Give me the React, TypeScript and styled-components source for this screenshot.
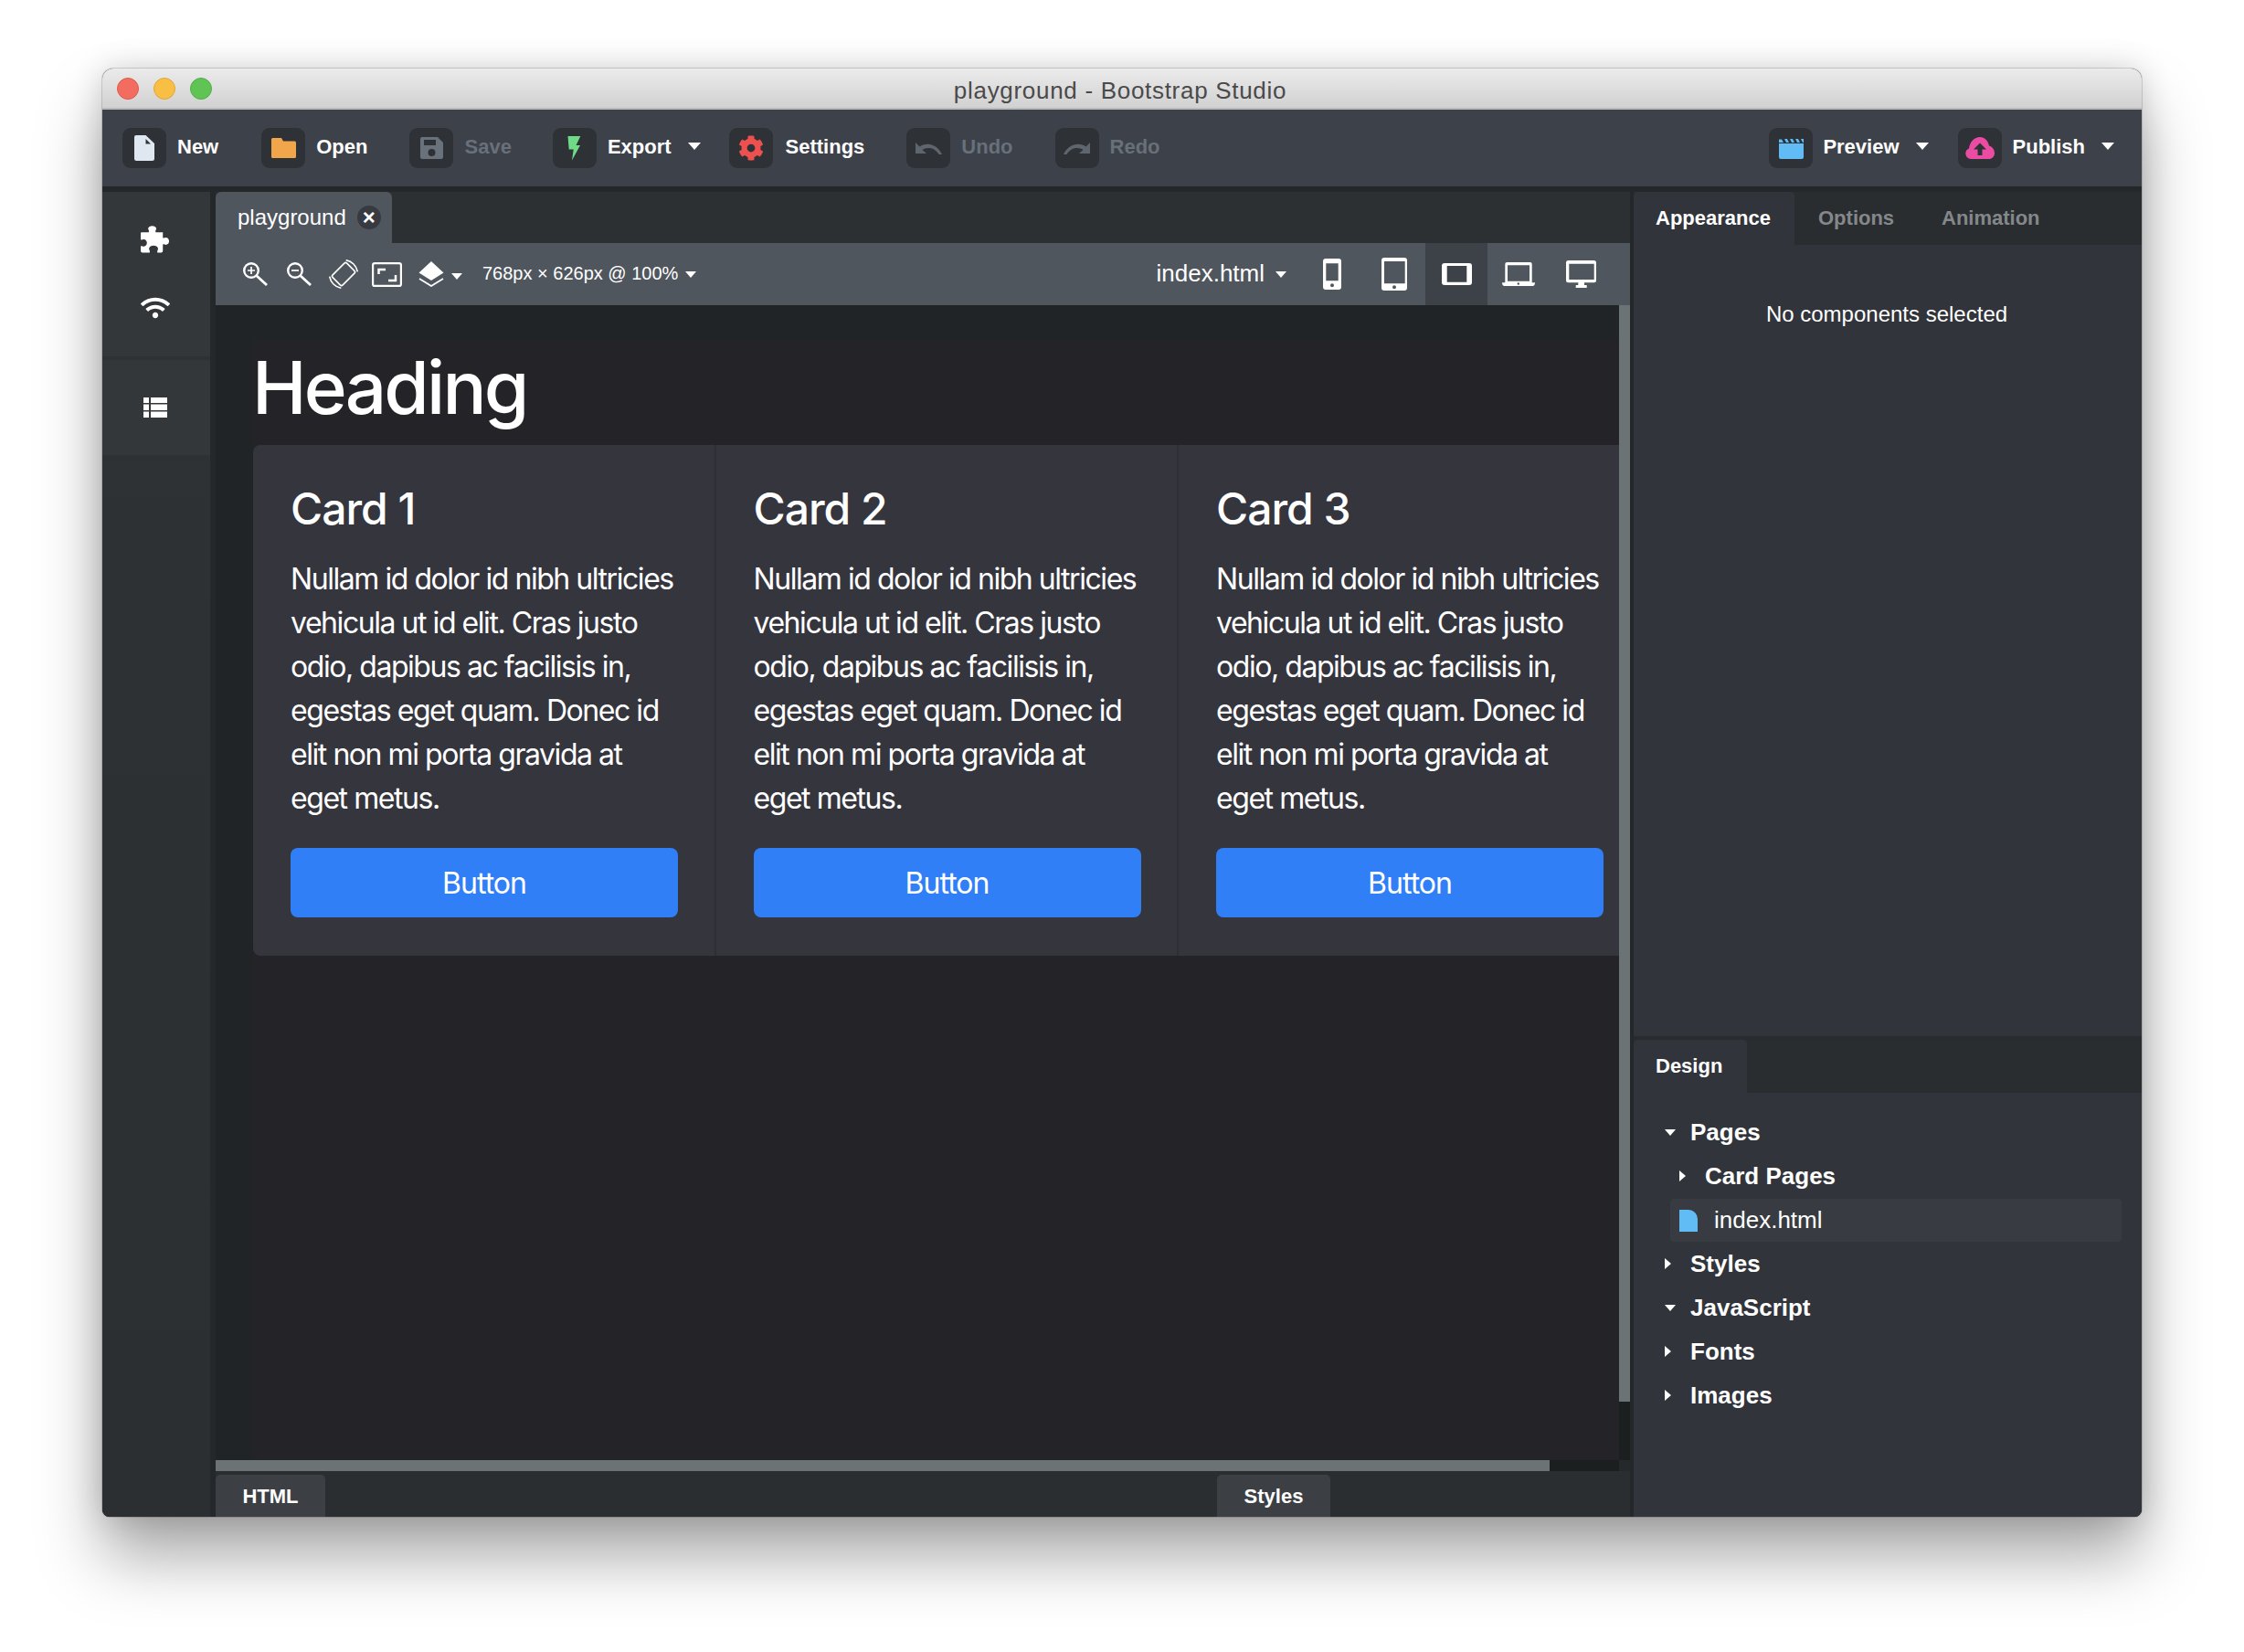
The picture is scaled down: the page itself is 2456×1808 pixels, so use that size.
import React from "react";
import styled, { createGlobalStyle } from "styled-components";
import { FaCog, FaWifi } from "react-icons/fa";

const Global = createGlobalStyle`
  html, body { margin: 0; padding: 0; background: #fff; }
  * { box-sizing: border-box; }
`;

const Stage = styled.div`
  width: 2456px;
  height: 1808px;
  padding: 75px 112px 148px 112px;
  background: #fff;
  overflow: hidden;
  font-family: "Liberation Sans", Arial, sans-serif;
`;

const Win = styled.div`
  width: 2232px;
  height: 1585px;
  display: flex;
  flex-direction: column;
  border-radius: 12px 12px 8px 8px;
  overflow: hidden;
  background: #26292c;
  box-shadow: 0 44px 70px rgba(0, 0, 0, 0.34), 0 0 34px rgba(0, 0, 0, 0.16), 0 0 0 1px rgba(0, 0, 0, 0.14);
`;

const TitleBar = styled.div`
  height: 45px;
  flex: none;
  display: flex;
  align-items: center;
  padding: 0 16px;
  gap: 16px;
  position: relative;
  background: linear-gradient(#ebebeb, #d1d1d1);
  border-bottom: 2px solid #b9b9b9;
`;

const Light = styled.span<{ $c: string; $b: string }>`
  width: 24px;
  height: 24px;
  border-radius: 50%;
  background: ${(p) => p.$c};
  border: 1px solid ${(p) => p.$b};
`;

const TitleText = styled.div`
  position: absolute;
  left: 0;
  right: 4px;
  top: 8px;
  text-align: center;
  font-size: 26px;
  line-height: 32px;
  letter-spacing: 0.7px;
  color: #4a4a4a;
`;

const Toolbar = styled.div`
  height: 84px;
  flex: none;
  display: flex;
  align-items: center;
  padding: 0 0 0 22px;
  background: #3d4149;
`;

const ToolSpacer = styled.div`
  flex: 1;
`;

const ToolBtn = styled.div<{ $off?: boolean; $right?: number }>`
  display: flex;
  align-items: center;
  margin-right: ${(p) => p.$right ?? 46}px;
  font-size: 22px;
  font-weight: 700;
  color: ${(p) => (p.$off ? "#68707a" : "#fff")};
`;

const ToolIcon = styled.span<{ $gap?: number }>`
  width: 48px;
  height: 44px;
  border-radius: 9px;
  background: #2e3135;
  display: flex;
  align-items: center;
  justify-content: center;
  margin-right: ${(p) => p.$gap ?? 12}px;
`;

const ToolLabel = styled.span`
  position: relative;
  top: -1px;
`;

const Caret = styled.span<{ $w?: number; $left?: number; $top?: number }>`
  display: inline-block;
  position: relative;
  top: ${(p) => p.$top ?? -2}px;
  width: 0;
  height: 0;
  margin-left: ${(p) => p.$left ?? 18}px;
  border-left: ${(p) => (p.$w ?? 14) / 2}px solid transparent;
  border-right: ${(p) => (p.$w ?? 14) / 2}px solid transparent;
  border-top: ${(p) => Math.round((p.$w ?? 14) * 0.58)}px solid #fff;
`;

const Main = styled.div`
  flex: 1;
  min-height: 0;
  display: flex;
  padding-top: 6px;
  background: #25282b;
`;

const Sidebar = styled.div`
  width: 118px;
  margin-right: 6px;
  flex: none;
  display: flex;
  flex-direction: column;
  background: linear-gradient(#2e3235, #2b2f31);
`;

const SideBlock = styled.div<{ $h: number }>`
  height: ${(p) => p.$h}px;
  margin-bottom: 4px;
  background: #33373a;
  color: #fff;
  display: flex;
  flex-direction: column;
  align-items: center;
`;

const SideIcon = styled.span<{ $mt: number }>`
  display: flex;
  margin-top: ${(p) => p.$mt}px;
  margin-left: -2px;
`;

const Center = styled.div`
  width: 1548px;
  margin-right: 4px;
  flex: none;
  display: flex;
  flex-direction: column;
  background: #2d3033;
`;

const TabStrip = styled.div`
  height: 56px;
  flex: none;
  display: flex;
`;

const DocTab = styled.div`
  width: 193px;
  border-radius: 6px 6px 0 0;
  background: #4f565e;
  display: flex;
  align-items: center;
  padding: 0 0 0 24px;
  font-size: 24px;
  color: #fff;
`;

const CloseDot = styled.span`
  width: 26px;
  height: 26px;
  margin-left: 12px;
  border-radius: 50%;
  background: #373b41;
  color: #fff;
  font-size: 24px;
  font-weight: 700;
  line-height: 26px;
  display: flex;
  align-items: center;
  justify-content: center;
`;

const CanvasBar = styled.div`
  height: 68px;
  flex: none;
  display: flex;
  align-items: center;
  background: #4f565e;
  color: #fff;
  padding-right: 20px;
`;

const BarIcons = styled.div`
  display: flex;
  align-items: center;
  padding-left: 30px;
`;

const BarIcon = styled.span<{ $mr?: number }>`
  margin-right: ${(p) => p.$mr ?? 0}px;
  display: flex;
  flex: none;
`;

const SizeText = styled.span`
  font-size: 20px;
  margin-left: 22px;
  position: relative;
  top: -1px;
`;

const PageName = styled.span`
  margin-left: auto;
  font-size: 26px;
  position: relative;
  top: -1px;
`;

const Device = styled.span<{ $on?: boolean }>`
  width: 68px;
  height: 68px;
  flex: none;
  display: flex;
  align-items: center;
  justify-content: center;
  background: ${(p) => (p.$on ? "#3c4248" : "transparent")};
`;

const DeviceGroup = styled.div`
  display: flex;
  margin-left: 16px;
`;

const Canvas = styled.div`
  flex: none;
  height: 1276px;
  display: grid;
  grid-template-columns: 1536px 12px;
  grid-template-rows: 1264px 12px;
  background: #212426;
`;

const Viewport = styled.div`
  overflow: hidden;
  padding: 38px 0 0 41px;
`;

const PageDoc = styled.div`
  width: 1600px;
  height: 1300px;
  background: #232328;
  color: #fff;
  font-family: Inter, "Liberation Sans", sans-serif;
  font-size: 32px;
  line-height: 48px;
`;

const Heading = styled.h1`
  margin: 0 0 0 -1px;
  height: 115px;
  padding-top: 4px;
  font-size: 80px;
  line-height: 96px;
  font-weight: 500;
  letter-spacing: -2.8px;
  color: #fff;
`;

const CardGroup = styled.div`
  display: flex;
  width: 1520px;
  border-radius: 8px;
  background: #35353e;
`;

const Card = styled.div<{ $last?: boolean }>`
  width: 506.5px;
  flex: none;
  height: 559px;
  padding: 41px 0 0 41px;
  border-right: ${(p) => (p.$last ? "0" : "2px solid #2e2e36")};
`;

const CardTitle = styled.h4`
  margin: 0 0 24px 0;
  font-size: 48px;
  line-height: 58px;
  font-weight: 500;
  letter-spacing: -1px;
`;

const CardText = styled.p`
  margin: 0 0 30px 0;
  letter-spacing: -1.45px;
  white-space: pre-line;
`;

const CardButton = styled.div`
  height: 76px;
  width: 424px;
  padding-top: 2px;
  border-radius: 8px;
  background: #307ff7;
  display: flex;
  align-items: center;
  justify-content: center;
  letter-spacing: -1px;
`;

const VTrack = styled.div`
  background: #1c1f20;
`;

const VThumb = styled.div`
  height: 1200px;
  background: #6b7375;
`;

const HTrack = styled.div`
  background: #1c1f20;
`;

const HThumb = styled.div`
  width: 1460px;
  height: 12px;
  background: #6b7375;
`;

const Corner = styled.div`
  background: #26292b;
`;

const BottomBar = styled.div`
  flex: 1;
  min-height: 0;
  display: flex;
  align-items: flex-end;
  background: #2a2e30;
`;

const BottomTab = styled.div<{ $w: number; $left?: number }>`
  width: ${(p) => p.$w}px;
  height: 46px;
  padding-top: 2px;
  margin-left: ${(p) => p.$left ?? 0}px;
  border-radius: 5px 5px 0 0;
  background: #3c4044;
  color: #fff;
  font-size: 22px;
  font-weight: 700;
  display: flex;
  align-items: center;
  justify-content: center;
`;

const Right = styled.div`
  flex: 1;
  min-width: 0;
  display: flex;
  flex-direction: column;
`;

const Panel = styled.div<{ $h?: number }>`
  height: ${(p) => (p.$h ? `${p.$h}px` : "auto")};
  flex: ${(p) => (p.$h ? "none" : "1")};
  background: #31343a;
  display: flex;
  flex-direction: column;
`;

const PanelTabs = styled.div`
  height: 58px;
  flex: none;
  display: flex;
  background: #292d30;
`;

const PanelTab = styled.div<{ $on?: boolean; $w: number }>`
  width: ${(p) => p.$w}px;
  flex: none;
  display: flex;
  align-items: center;
  padding-left: ${(p) => (p.$on ? 24 : 26)}px;
  background: ${(p) => (p.$on ? "#31343a" : "transparent")};
  border-radius: 4px 4px 0 0;
  color: ${(p) => (p.$on ? "#fff" : "#85888b")};
  font-size: 22px;
  font-weight: 700;
`;

const EmptyNote = styled.div`
  text-align: center;
  padding: 60px 2px 0 0;
  font-size: 24px;
  line-height: 32px;
  color: #fff;
`;

const PanelGap = styled.div`
  height: 4px;
  flex: none;
  background: #292c2f;
`;

const Tree = styled.div`
  padding-top: 19px;
  color: #fff;
  font-size: 26px;
  font-weight: 700;
`;

const Row = styled.div<{ $indent?: number }>`
  height: 48px;
  display: flex;
  align-items: center;
  padding-left: ${(p) => p.$indent ?? 34}px;
`;

const ArrowBox = styled.span`
  width: 28px;
  flex: none;
  display: flex;
  align-items: center;
`;

const CaretRight = styled.span`
  width: 0;
  height: 0;
  border-top: 6px solid transparent;
  border-bottom: 6px solid transparent;
  border-left: 7px solid #fff;
`;

const SelRow = styled.div`
  height: 47px;
  margin: 1px 22px 0 40px;
  padding-left: 10px;
  border-radius: 4px;
  background: #383b41;
  display: flex;
  align-items: center;
  font-weight: 400;
`;

const FileGlyph = styled.span`
  width: 20px;
  height: 24px;
  margin-right: 18px;
  background: #61bbf5;
  border-radius: 0 10px 0 0;
`;

const I = {
  New: () => (
    <svg width="22" height="28" viewBox="0 0 22 28"><path fillRule="evenodd" d="M2 0H12.500L22 9V25.500a2.500 2.500 0 0 1-2.500 2.500H2.500A2.500 2.500 0 0 1 0 25.500V2a2 2 0 0 1 2-2z M12.500 4v5.500h5.500z" fill="#dfe8f0" /></svg>
  ),
  Open: () => (
    <svg width="27" height="22" viewBox="0 0 27 22"><path d="M1.500 0H11l2 3.500h12.500A1.500 1.500 0 0 1 27 5v15.500a1.500 1.500 0 0 1-1.500 1.500H1.500A1.500 1.500 0 0 1 0 20.500V1.500A1.500 1.500 0 0 1 1.500 0z" fill="#f2a64c" /></svg>
  ),
  Save: () => (
    <svg width="25" height="24" viewBox="0 0 25 24"><path fillRule="evenodd" d="M2 0h17l6 6v16a2 2 0 0 1-2 2H2a2 2 0 0 1-2-2V2a2 2 0 0 1 2-2z M4 3v6h13V3z M12.500 13a4 4 0 1 0 0 8 4 4 0 0 0 0-8z" fill="#69727b" /></svg>
  ),
  Bolt: () => (
    <svg width="15" height="27" viewBox="0 0 15 27"><path d="M0.500 0H14.300L9.500 10H14L5 26.500L6.700 14.500H1.700z" fill="#6fdb86" /></svg>
  ),
  Undo: () => (
    <svg width="29" height="14" viewBox="0 0 29 14"><path d="M0 1v12h12L7.500 9C11 6.500 20 5 25.500 14H29C24 3 12 0 4.500 5.500z" fill="#5e656d" /></svg>
  ),
  Redo: () => (
    <svg width="29" height="14" viewBox="0 0 29 14"><path d="M29 1v12H17l4.500-4C18 6.500 9 5 3.500 14H0C5 3 17 0 24.500 5.500z" fill="#5e656d" /></svg>
  ),
  Clapper: () => (
    <svg width="27" height="23" viewBox="0 0 27 23"><path d="M0 5V1.500h3L5 5z M6 1h3l2 4H8z M12 1h3l2 4h-3z M18 1h3l2 4h-3z M24 1h3v4h-1z M0 6h27v15a2 2 0 0 1-2 2H2a2 2 0 0 1-2-2z" fill="#61bbf5" /></svg>
  ),
  Cloud: () => (
    <svg width="32" height="24" viewBox="0 0 32 24"><path fillRule="evenodd" d="M6 24a6 6 0 0 1-2-11.500C5 5 10 0 16 0c5 0 9 4 10 9.500 3.500 1 6 4 6 8 0 4-3 6.500-6 6.500z M16 6.500l-7 7h4.500V20h5v-6.500H23z" fill="#ea4ca4" /></svg>
  ),
  Puzzle: () => (
    <svg width="32" height="31" viewBox="0 0 33 31"><path d="M1 8H9C10 6 8 5 8.500 3.500C9 0 17 0 17.500 3.500C18 5 16 6 17 8H25V14C26 15.500 27 13.500 29 14C33 15 33 21 29 22C27 22.500 26 20.500 25 22V29a2 2 0 0 1-2 2H19C18 29 20 28 19.500 26C19 22 10 22 9.500 26C9 28 11 29 10 31H2a2 2 0 0 1-2-2V24C1 22.500 2 24.500 4 24C8 23 8 17 4 16C2 15.500 1 17.500 0 16V9a1 1 0 0 1 1-1Z" fill="#fff" /></svg>
  ),
  List: () => (
    <svg width="26" height="22" viewBox="0 0 26 22" fill="#fff"><rect x="0" y="0" width="6" height="6" /><rect x="8" y="0" width="18" height="6" /><rect x="0" y="7.500" width="6" height="6.500" /><rect x="8" y="7.500" width="18" height="6.500" /><rect x="0" y="15.500" width="6" height="6.500" /><rect x="8" y="15.500" width="18" height="6.500" /></svg>
  ),
  ZoomIn: () => (
    <svg width="27" height="26" viewBox="0 0 27 26" fill="none" stroke="#fff" strokeWidth="2.400"><circle cx="9" cy="9" r="7.800" /><path d="M14.500 14.500L26 25" strokeWidth="2.800" /><path d="M9 5v8M5 9h8" strokeWidth="1.700" /></svg>
  ),
  ZoomOut: () => (
    <svg width="27" height="26" viewBox="0 0 27 26" fill="none" stroke="#fff" strokeWidth="2.400"><circle cx="9" cy="9" r="7.800" /><path d="M14.500 14.500L26 25" strokeWidth="2.800" /><path d="M5 9h8" strokeWidth="1.700" /></svg>
  ),
  Rotate: () => (
    <svg width="32" height="32" viewBox="0 0 32 32" fill="none" stroke="#fff" strokeWidth="1.600"><rect x="8.200" y="5" width="15.600" height="22" rx="2" transform="rotate(45 16 16)" /><path d="M18.700 0.700A15.500 15.500 0 0 1 31.300 13.300M13.300 31.300A15.500 15.500 0 0 1 0.700 18.700" /></svg>
  ),
  Full: () => (
    <svg width="33" height="27" viewBox="0 0 33 27" fill="none" stroke="#fff"><rect x="1.100" y="1.100" width="30.800" height="24.800" rx="2" strokeWidth="2.200" /><path d="M7.500 13V8H15M26 14v6h-8" strokeWidth="2.500" /></svg>
  ),
  Layers: () => (
    <svg width="28" height="28" viewBox="0 0 28 28"><path d="M14 0L27.500 12.500L14 21L0.500 12.500z" fill="#fff" /><path d="M1 19L14 27L27 19" fill="none" stroke="#fff" strokeWidth="1.800" /></svg>
  ),
  Phone: () => (
    <svg width="20" height="34" viewBox="0 0 20 34"><path fillRule="evenodd" d="M3 0h14a3 3 0 0 1 3 3v28a3 3 0 0 1-3 3H3a3 3 0 0 1-3-3V3a3 3 0 0 1 3-3z M3.300 5.300v19h13.400v-19z M10 27.300a2 2 0 1 0 0 4 2 2 0 0 0 0-4z" fill="#fff" /></svg>
  ),
  Tablet: () => (
    <svg width="28" height="36" viewBox="0 0 28 36"><path fillRule="evenodd" d="M3 0h22a3 3 0 0 1 3 3v30a3 3 0 0 1-3 3H3a3 3 0 0 1-3-3V3a3 3 0 0 1 3-3z M3 4v24.300h22.700V4z M14 30.300a2 2 0 1 0 0 4 2 2 0 0 0 0-4z" fill="#fff" /></svg>
  ),
  Land: () => (
    <svg width="33" height="24" viewBox="0 0 33 24"><path fillRule="evenodd" d="M3 0h27a3 3 0 0 1 3 3v18a3 3 0 0 1-3 3H3a3 3 0 0 1-3-3V3a3 3 0 0 1 3-3z M5.700 3v17.700h21.600V3z" fill="#fff" /></svg>
  ),
  Laptop: () => (
    <svg width="36" height="26" viewBox="0 0 36 26"><path fillRule="evenodd" d="M5.300 0H30.700a2 2 0 0 1 2 2V22.300H36C36 24.500 35 26 33.500 26H2.500C1 26 0 24.500 0 22.300H3.300V2a2 2 0 0 1 2-2z M6 3.300V20.700H30V3.300z M17.800 22.300a1.200 1.200 0 1 0 0 2.400 1.200 1.200 0 0 0 0-2.400z" fill="#fff" /></svg>
  ),
  Monitor: () => (
    <svg width="33" height="30" viewBox="0 0 33 30"><path fillRule="evenodd" d="M2.500 0h28A2.500 2.500 0 0 1 33 2.500v19.300a2.500 2.500 0 0 1-2.500 2.500H20V27h2.700v3H10.700v-3h2.600V24.300H2.500A2.500 2.500 0 0 1 0 21.800V2.500A2.500 2.500 0 0 1 2.500 0z M3.300 3.700V21H30.700V3.700z" fill="#fff" /></svg>
  ),
};

const lorem = "Nullam id dolor id nibh ultricies\nvehicula ut id elit. Cras justo\nodio, dapibus ac facilisis in,\negestas eget quam. Donec id\nelit non mi porta gravida at\neget metus.";

export default function App() {
  return (
    <Stage>
      <Global />
      <Win>
        <TitleBar>
          <Light $c="#f26d5f" $b="#e0574b" />
          <Light $c="#f9bf45" $b="#e0a536" />
          <Light $c="#5fc454" $b="#4fae45" />
          <TitleText>playground - Bootstrap Studio</TitleText>
        </TitleBar>
        <Toolbar>
          <ToolBtn $right={47}><ToolIcon><I.New /></ToolIcon><ToolLabel>New</ToolLabel></ToolBtn>
          <ToolBtn><ToolIcon><I.Open /></ToolIcon><ToolLabel>Open</ToolLabel></ToolBtn>
          <ToolBtn $off $right={45}><ToolIcon><I.Save /></ToolIcon><ToolLabel>Save</ToolLabel></ToolBtn>
          <ToolBtn $right={31}><ToolIcon><I.Bolt /></ToolIcon><ToolLabel>Export</ToolLabel><Caret /></ToolBtn>
          <ToolBtn $right={46}><ToolIcon $gap={14}><FaCog size={28} color="#ec5150" /></ToolIcon><ToolLabel>Settings</ToolLabel></ToolBtn>
          <ToolBtn $off><ToolIcon><I.Undo /></ToolIcon><ToolLabel>Undo</ToolLabel></ToolBtn>
          <ToolBtn $off><ToolIcon><I.Redo /></ToolIcon><ToolLabel>Redo</ToolLabel></ToolBtn>
          <ToolSpacer />
          <ToolBtn $right={32}><ToolIcon $gap={11}><I.Clapper /></ToolIcon><ToolLabel>Preview</ToolLabel><Caret /></ToolBtn>
          <ToolBtn $right={30}><ToolIcon><I.Cloud /></ToolIcon><ToolLabel>Publish</ToolLabel><Caret /></ToolBtn>
        </Toolbar>
        <Main>
          <Sidebar>
            <SideBlock $h={180}>
              <SideIcon $mt={36}><I.Puzzle /></SideIcon>
              <SideIcon $mt={44}><FaWifi size={32} /></SideIcon>
            </SideBlock>
            <SideBlock $h={104}>
              <SideIcon $mt={41}><I.List /></SideIcon>
            </SideBlock>
          </Sidebar>
          <Center>
            <TabStrip>
              <DocTab>playground<CloseDot>×</CloseDot></DocTab>
            </TabStrip>
            <CanvasBar>
              <BarIcons>
                <BarIcon $mr={21}><I.ZoomIn /></BarIcon>
                <BarIcon $mr={19}><I.ZoomOut /></BarIcon>
                <BarIcon $mr={15}><I.Rotate /></BarIcon>
                <BarIcon $mr={18}><I.Full /></BarIcon>
                <BarIcon><I.Layers /></BarIcon>
              </BarIcons>
              <Caret $w={12} $left={8} $top={2} />
              <SizeText>768px × 626px @ 100%</SizeText>
              <Caret $w={12} $left={8} $top={0} />
              <PageName>index.html</PageName>
              <Caret $w={12} $left={12} $top={0} />
              <DeviceGroup>
                <Device><I.Phone /></Device>
                <Device><I.Tablet /></Device>
                <Device $on><I.Land /></Device>
                <Device><I.Laptop /></Device>
                <Device><I.Monitor /></Device>
              </DeviceGroup>
            </CanvasBar>
            <Canvas>
              <Viewport>
                <PageDoc>
                  <Heading>Heading</Heading>
                  <CardGroup>
                    {["Card 1", "Card 2", "Card 3"].map((t, i) => (
                      <Card key={t} $last={i === 2}>
                        <CardTitle>{t}</CardTitle>
                        <CardText>{lorem}</CardText>
                        <CardButton>Button</CardButton>
                      </Card>
                    ))}
                  </CardGroup>
                </PageDoc>
              </Viewport>
              <VTrack><VThumb /></VTrack>
              <HTrack><HThumb /></HTrack>
              <Corner />
            </Canvas>
            <BottomBar>
              <BottomTab $w={120}>HTML</BottomTab>
              <BottomTab $w={124} $left={976}>Styles</BottomTab>
            </BottomBar>
          </Center>
          <Right>
            <Panel $h={924}>
              <PanelTabs>
                <PanelTab $on $w={176}>Appearance</PanelTab>
                <PanelTab $w={135}>Options</PanelTab>
                <PanelTab $w={160}>Animation</PanelTab>
              </PanelTabs>
              <EmptyNote>No components selected</EmptyNote>
            </Panel>
            <PanelGap />
            <Panel>
              <PanelTabs>
                <PanelTab $on $w={124}>Design</PanelTab>
              </PanelTabs>
              <Tree>
                <Row><ArrowBox><Caret $w={12} $left={0} $top={0} /></ArrowBox>Pages</Row>
                <Row $indent={50}><ArrowBox><CaretRight /></ArrowBox>Card Pages</Row>
                <SelRow><FileGlyph />index.html</SelRow>
                <Row><ArrowBox><CaretRight /></ArrowBox>Styles</Row>
                <Row><ArrowBox><Caret $w={12} $left={0} $top={0} /></ArrowBox>JavaScript</Row>
                <Row><ArrowBox><CaretRight /></ArrowBox>Fonts</Row>
                <Row><ArrowBox><CaretRight /></ArrowBox>Images</Row>
              </Tree>
            </Panel>
          </Right>
        </Main>
      </Win>
    </Stage>
  );
}
